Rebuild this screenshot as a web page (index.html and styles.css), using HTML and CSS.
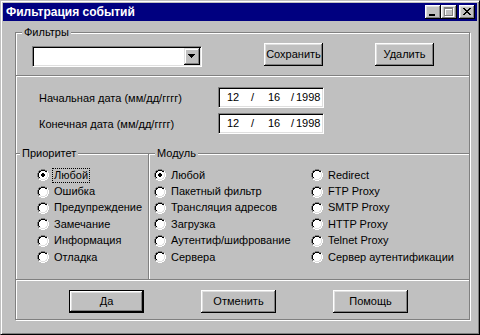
FILE: index.html
```html
<!DOCTYPE html>
<html lang="ru">
<head>
<meta charset="utf-8">
<title>Фильтрация событий</title>
<link rel="stylesheet" href="styles.css">
</head>
<body>
<svg class="defs" width="0" height="0" aria-hidden="true">
  <defs>
    <symbol id="radio" viewBox="0 0 12 12">
      <path fill="#808080" d="M4 0h4v1h-4z M2 1h2v1h-2z M8 1h2v1h-2z M1 2h1v2h-1z M0 4h1v4h-1z M1 8h1v2h-1z"/>
      <path fill="#fff" d="M10 2h1v2h-1z M11 4h1v4h-1z M10 8h1v2h-1z M2 10h2v1h-2z M8 10h2v1h-2z M4 11h4v1h-4z"/>
      <path fill="#000" d="M4 1h4v1h-4z M2 2h2v1h-2z M8 2h2v1h-2z M2 3h1v1h-1z M1 4h1v4h-1z M2 8h1v1h-1z"/>
      <path fill="#dfdfdf" d="M9 3h1v1h-1z M10 4h1v4h-1z M9 8h1v1h-1z M2 9h2v1h-2z M8 9h2v1h-2z M4 10h4v1h-4z"/>
      <path fill="#fff" d="M4 2h4v1h-4z M3 3h6v1h-6z M2 4h8v4h-8z M3 8h6v1h-6z M4 9h4v1h-4z"/>
    </symbol>
    <symbol id="radio-on" viewBox="0 0 12 12">
      <use href="#radio"/>
      <path fill="#000" d="M5 4h2v4h-2z M4 5h4v2h-4z"/>
    </symbol>
  </defs>
</svg>

<div class="window">
  <div class="titlebar">
    <span class="title">Фильтрация событий</span>
    <div class="tb-btns">
      <button class="tb-btn"><svg width="16" height="14" viewBox="0 0 16 14"><path fill="#000" d="M4 9h6v2h-6z"/></svg></button>
      <button class="tb-btn tb-max"><svg width="16" height="14" viewBox="0 0 16 14"><path fill="#fff" d="M4 3h9v2h-9z M4 5h1v7h-1z M12 5h1v7h-1z M4 11h9v1h-9z"/><path fill="#808080" d="M3 2h9v2h-9z M3 4h1v7h-1z M11 4h1v7h-1z M3 10h9v1h-9z"/></svg></button>
      <button class="tb-btn"><svg width="16" height="14" viewBox="0 0 16 14"><path fill="#000" d="M4 3h2v1h-2z M10 3h2v1h-2z M5 4h2v1h-2z M9 4h2v1h-2z M6 5h4v1h-4z M7 6h2v1h-2z M6 7h4v1h-4z M5 8h2v1h-2z M9 8h2v1h-2z M4 9h2v1h-2z M10 9h2v1h-2z"/></svg></button>
    </div>
  </div>

  <div class="client">
    <div class="frame">
      <section class="sec s1">
        <span class="legend lg-filters">Фильтры</span>
        <div class="combo">
          <span class="combo-text"></span>
          <span class="combo-btn"><svg width="16" height="17" viewBox="0 0 16 17"><path fill="#000" d="M4 6h7v1h-7z M5 7h5v1h-5z M6 8h3v1h-3z M7 9h1v1h-1z"/></svg></span>
        </div>
        <button class="btn btn-save">Сохранить</button>
        <button class="btn btn-del">Удалить</button>
      </section>

      <section class="sec s2">
        <div class="dates">
          <span class="date-label">Начальная дата (мм/дд/гггг)</span>
          <div class="datefield"><span class="d-mm">12</span><span class="d-s1">/</span><span class="d-dd">16</span><span class="d-s2">/</span><span>1998</span></div>
          <span class="date-label">Конечная дата (мм/дд/гггг)</span>
          <div class="datefield"><span class="d-mm">12</span><span class="d-s1">/</span><span class="d-dd">16</span><span class="d-s2">/</span><span>1998</span></div>
        </div>
      </section>

      <section class="sec s3">
        <div class="group prio">
          <span class="legend lg-prio">Приоритет</span>
          <ul class="radios">
            <li><svg class="rb"><use href="#radio-on"/></svg><span class="rl focus">Любой</span></li>
            <li><svg class="rb"><use href="#radio"/></svg><span class="rl">Ошибка</span></li>
            <li><svg class="rb"><use href="#radio"/></svg><span class="rl">Предупреждение</span></li>
            <li><svg class="rb"><use href="#radio"/></svg><span class="rl">Замечание</span></li>
            <li><svg class="rb"><use href="#radio"/></svg><span class="rl">Информация</span></li>
            <li><svg class="rb"><use href="#radio"/></svg><span class="rl">Отладка</span></li>
          </ul>
        </div>
        <div class="group module">
          <span class="legend lg-mod">Модуль</span>
          <div class="mod-cols">
            <ul class="radios col1">
              <li><svg class="rb"><use href="#radio-on"/></svg><span class="rl">Любой</span></li>
              <li><svg class="rb"><use href="#radio"/></svg><span class="rl">Пакетный фильтр</span></li>
              <li><svg class="rb"><use href="#radio"/></svg><span class="rl">Трансляция адресов</span></li>
              <li><svg class="rb"><use href="#radio"/></svg><span class="rl">Загрузка</span></li>
              <li><svg class="rb"><use href="#radio"/></svg><span class="rl">Аутентиф/шифрование</span></li>
              <li><svg class="rb"><use href="#radio"/></svg><span class="rl">Сервера</span></li>
            </ul>
            <ul class="radios col2">
              <li><svg class="rb"><use href="#radio"/></svg><span class="rl">Redirect</span></li>
              <li><svg class="rb"><use href="#radio"/></svg><span class="rl">FTP Proxy</span></li>
              <li><svg class="rb"><use href="#radio"/></svg><span class="rl">SMTP Proxy</span></li>
              <li><svg class="rb"><use href="#radio"/></svg><span class="rl">HTTP Proxy</span></li>
              <li><svg class="rb"><use href="#radio"/></svg><span class="rl">Telnet Proxy</span></li>
              <li><svg class="rb"><use href="#radio"/></svg><span class="rl">Сервер аутентификации</span></li>
            </ul>
          </div>
        </div>
      </section>

      <section class="sec s4">
        <button class="btn btn-wide btn-default">Да</button>
        <button class="btn btn-wide">Отменить</button>
        <button class="btn btn-wide">Помощь</button>
      </section>
    </div>
  </div>
</div>
</body>
</html>
```

FILE: styles.css
```css
html, body {
  margin: 0;
  padding: 0;
  background: #c0c0c0;
}

.defs {
  position: absolute;
  width: 0;
  height: 0;
  overflow: hidden;
}

.window {
  width: 480px;
  height: 335px;
  box-sizing: border-box;
  background: #c0c0c0;
  border: 1px solid;
  border-color: #c0c0c0 #000 #000 #c0c0c0;
  box-shadow: inset 1px 1px 0 #fff, inset -1px -1px 0 #808080;
  padding: 2px;
  display: flex;
  flex-direction: column;
  font-family: "Liberation Sans", Arial, sans-serif;
  font-size: 11px;
  color: #000;
}

.titlebar {
  height: 18px;
  flex: none;
  background: #000080;
  display: flex;
  align-items: center;
  padding: 0 2px 0 3px;
}

.title {
  flex: 1;
  color: #fff;
  font-weight: bold;
  font-size: 12px;
  line-height: 14px;
}

.tb-btns {
  display: flex;
}

.tb-btn {
  width: 16px;
  height: 14px;
  padding: 0;
  border: 0;
  margin: 0;
  background: #c0c0c0;
  box-shadow: inset -1px -1px 0 #000, inset 1px 1px 0 #fff, inset -2px -2px 0 #808080, inset 2px 2px 0 #dfdfdf;
  display: block;
}

.tb-btn svg {
  display: block;
  shape-rendering: crispEdges;
}

.tb-max {
  margin-right: 2px;
}

.client {
  flex: 1;
  padding: 11px 0 0 12px;
}

.frame {
  width: 455px;
  height: 288px;
  box-sizing: border-box;
  border: 1px solid #808080;
  box-shadow: 1px 1px 0 #fff, inset 1px 1px 0 #fff;
  display: flex;
  flex-direction: column;
}

.sec {
  position: relative;
  box-sizing: border-box;
  flex: none;
}

.sec + .sec {
  border-top: 1px solid #808080;
  box-shadow: inset 0 1px 0 #fff;
}

.legend {
  position: absolute;
  top: -7px;
  background: #c0c0c0;
  padding: 0 2px;
  line-height: 13px;
  white-space: nowrap;
}

.lg-filters { left: 6px; }
.lg-prio { left: 4px; }
.lg-mod { left: 6px; }

/* Section 1 */
.s1 {
  height: 42px;
  display: flex;
  align-items: flex-start;
}

.combo {
  margin: 13px 0 0 16px;
  width: 170px;
  height: 21px;
  box-sizing: border-box;
  background: #fff;
  border: 1px solid;
  border-color: #808080 #fff #fff #808080;
  box-shadow: inset 1px 1px 0 #000, inset -1px -1px 0 #dfdfdf;
  padding: 1px;
  display: flex;
}

.combo-text {
  flex: 1;
}

.combo-btn {
  width: 16px;
  height: 17px;
  background: #c0c0c0;
  box-shadow: inset -1px -1px 0 #000, inset 1px 1px 0 #dfdfdf, inset -2px -2px 0 #808080, inset 2px 2px 0 #fff;
}

.combo-btn svg {
  display: block;
  shape-rendering: crispEdges;
}

.btn {
  font: inherit;
  color: #000;
  background: #c0c0c0;
  border: 0;
  padding: 0;
  margin: 0;
  box-sizing: border-box;
  height: 23px;
  line-height: 21px;
  text-align: center;
  box-shadow: inset -1px -1px 0 #000, inset 1px 1px 0 #fff, inset -2px -2px 0 #808080, inset 2px 2px 0 #dfdfdf;
}

.btn-save {
  width: 59px;
  margin: 10px 0 0 62px;
}

.btn-del {
  width: 59px;
  margin: 10px 0 0 52px;
}

/* Section 2 */
.s2 {
  height: 78px;
  padding: 11px 0 0 23px;
}

.dates {
  display: grid;
  grid-template-columns: 179px 106px;
  grid-auto-rows: 21px;
  row-gap: 5px;
  align-items: center;
}

.date-label {
  line-height: 13px;
  padding-top: 2px;
}

.datefield {
  height: 21px;
  box-sizing: border-box;
  background: #fff;
  border: 1px solid;
  border-color: #808080 #fff #fff #808080;
  box-shadow: inset 1px 1px 0 #000, inset -1px -1px 0 #dfdfdf;
  display: flex;
  align-items: center;
  padding-left: 8px;
  line-height: 13px;
}

.d-mm { width: 24px; }
.d-s1 { width: 17px; }
.d-dd { width: 23px; }
.d-s2 { width: 5px; }

/* Section 3 */
.s3 {
  height: 126px;
  display: flex;
}

.group {
  position: relative;
  box-sizing: border-box;
}

.prio {
  width: 132px;
  padding: 13px 0 0 21px;
}

.module {
  flex: 1;
  border-left: 1px solid #808080;
  box-shadow: inset 1px 0 0 #fff;
  padding: 13px 0 0 5px;
}

.mod-cols {
  display: flex;
}

.col1 {
  width: 157px;
}

.radios {
  list-style: none;
  margin: 0;
  padding: 0;
}

.radios li {
  height: 16.4px;
  display: flex;
  align-items: center;
  gap: 3px;
  white-space: nowrap;
}

.rb {
  width: 12px;
  height: 12px;
  flex: none;
  display: block;
  shape-rendering: crispEdges;
}

.rl {
  border: 1px dotted transparent;
  padding: 0 1px;
  line-height: 13px;
}

.rl.focus {
  border-color: #000;
}

/* Section 4 */
.s4 {
  height: 40px;
  display: flex;
  align-items: flex-start;
  padding: 10px 0 0 53px;
  gap: 57px;
}

.btn-wide {
  width: 75px;
}

.btn-default {
  border: 1px solid #000;
  line-height: 19px;
}
```
